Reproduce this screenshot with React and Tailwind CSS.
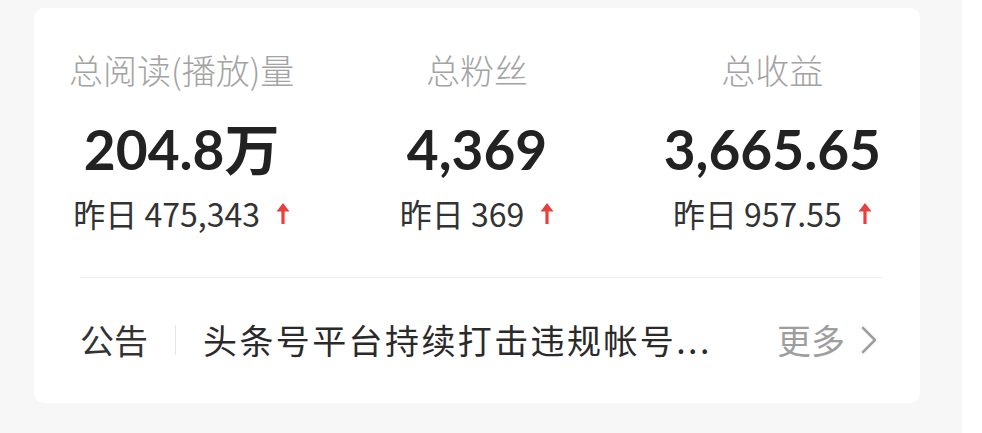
export default function App() {
  const cjk = { fontFamily: '"Noto Sans CJK SC", "Noto Sans", sans-serif' };
  const num = { fontFamily: 'Lato, "Noto Sans CJK SC", sans-serif' };
  const Arrow = () => (
    <svg width="14" height="23" viewBox="0 0 14 23" className="inline-block ml-[16px]">
      <path d="M7 1 L13.5 9.5 L8.6 9.5 L8.6 22 L5.4 22 L5.4 9.5 L0.5 9.5 Z" fill="#e8403c" />
    </svg>
  );
  const stats = [
    { label: '总阅读(播放)量', value: '204.8万', sub: '475,343' },
    { label: '总粉丝', value: '4,369', sub: '369' },
    { label: '总收益', value: '3,665.65', sub: '957.55' },
  ];
  return (
    <div className="flex w-[982px] h-[433px]" style={cjk}>
      <div className="w-[962px] h-full bg-[#f7f7f7] pt-[8px] pl-[34px]">
        <div className="w-[886px] h-[395px] bg-white rounded-[10px] flex flex-col">
          <div className="grid grid-cols-3 pt-[41px]">
            {stats.map((s) => (
              <div key={s.label} className="flex flex-col items-center">
                <div className="text-[34px] leading-[42px] font-light text-[#a3a3a3]">{s.label}</div>
                <div className="mt-[27px] text-[55px] leading-[62px] font-bold text-[#222222]" style={num}>
                  {s.value}
                </div>
                <div className="mt-[14px] flex items-center text-[32px] leading-[38px] text-[#333333]">
                  <span>昨日 {s.sub}</span>
                  <Arrow />
                </div>
              </div>
            ))}
          </div>
          <div className="mt-[45px] ml-[46px] mr-[38px] h-px bg-[#f0f0f0]" />
          <div className="mt-[40px] pl-[46px] pr-[42px] flex items-center h-[44px]">
            <span className="text-[34px] leading-[44px] text-[#333333]">公告</span>
            <span className="ml-[27px] w-px h-[30px] bg-[#e6e6e6]" />
            <span className="ml-[27px] text-[34px] leading-[44px] text-[#2a2a2a] tracking-[2.4px]">头条号平台持续打击违规帐号...</span>
            <span className="ml-auto text-[34px] leading-[44px] text-[#9e9e9e]">更多</span>
            <svg width="18" height="30" viewBox="0 0 18 30" className="ml-[15px]">
              <polyline points="3,3 15,15 3,27" fill="none" stroke="#9e9e9e" strokeWidth="2.6" strokeLinecap="round" strokeLinejoin="round" />
            </svg>
          </div>
        </div>
      </div>
      <div className="w-[20px] h-full bg-white" />
    </div>
  );
}
